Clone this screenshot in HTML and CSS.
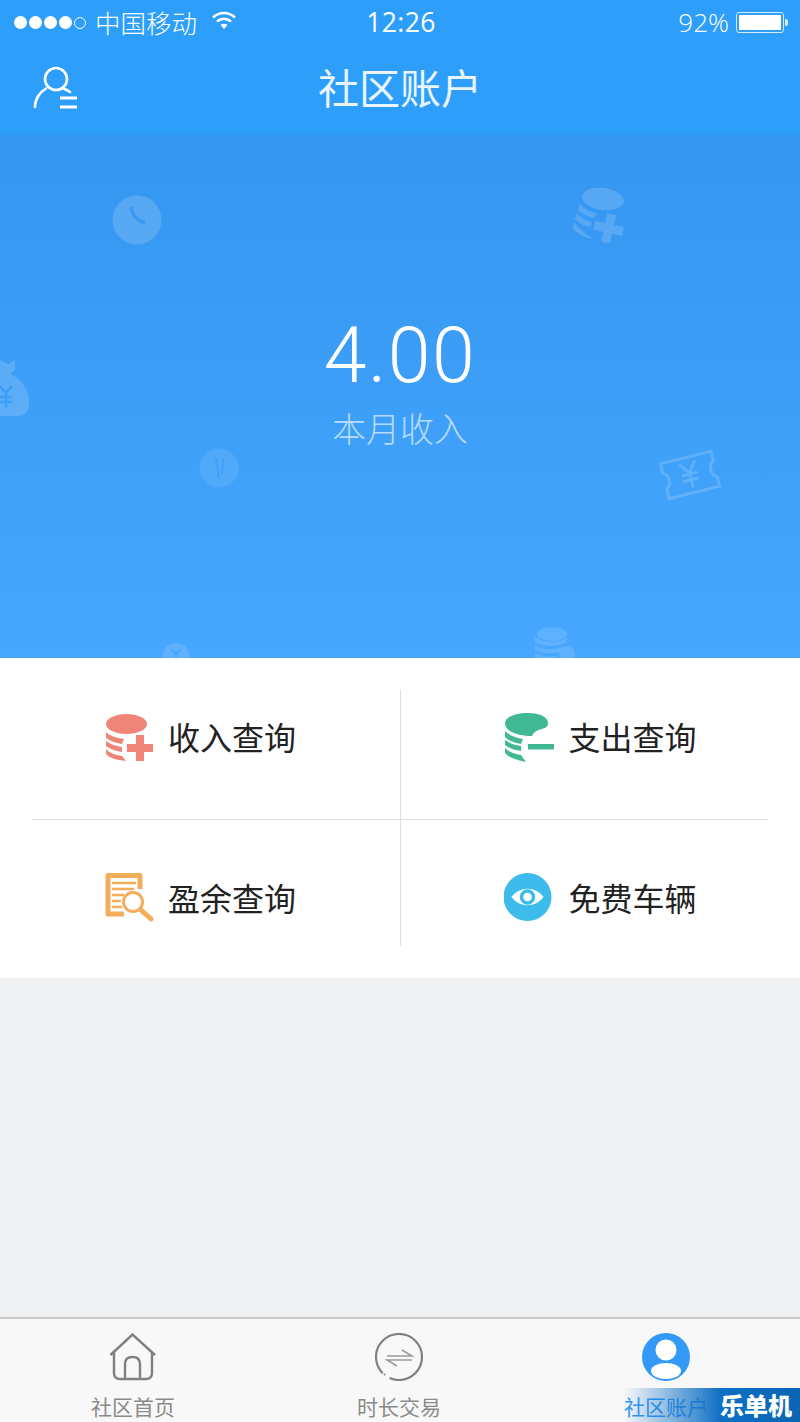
FILE: index.html
```html
<!DOCTYPE html>
<html lang="zh-CN">
<head>
    <meta charset="UTF-8">
    <title>社区账户</title>
    <link rel="stylesheet" href="styles.css">
</head>
<body>
    <div class="app">
        <header class="top">
            <div class="status">
                <div class="status-left">
                    <span class="dots"><i></i><i></i><i></i><i></i><i class="empty"></i></span>
                    <span class="carrier">中国移动</span>
                    <svg class="wifi" width="26" height="20" viewBox="0 0 26 20">
                        <path d="M2 7.500C8.500 1.500 17.500 1.500 24 7.500M6 11.500C10 8 16 8 20 11.500" fill="none" stroke="#fff" stroke-width="2.600"/>
                        <path d="M9.500 15C11.500 13.300 14.500 13.300 16.500 15L13 19Z" fill="#fff"/>
                    </svg>
                </div>
                <span class="time">12:26</span>
                <div class="status-right">
                    <span class="percent">92%</span>
                    <span class="battery"><span class="battery-fill"></span></span>
                    <span class="battery-tip"></span>
                </div>
            </div>
            <nav class="nav">
                <svg class="nav-user" width="46" height="46" viewBox="0 0 46 46">
                    <g fill="none" stroke="#fff" stroke-width="2.600" stroke-linecap="round">
                        <circle cx="23" cy="13" r="11"/>
                        <path d="M2 41C2 33 7 26 13 22.500M30 22.500C32.500 23.300 35 24.500 37 26"/>
                    </g>
                    <path d="M27 32H44M27 41H44" stroke="#fff" stroke-width="3"/>
                </svg>
                <h1 class="nav-title">社区账户</h1>
            </nav>
        </header>

        <section class="hero">
            <!-- faded decorations -->
            <svg class="deco deco-clock" width="50" height="52" viewBox="0 0 50 52">
                <circle cx="25" cy="26" r="24.500" fill="#fff"/>
                <path d="M19 13C20 21 24 26 33 29" fill="none" stroke="#3a9cf2" stroke-width="3"/>
            </svg>
            <svg class="deco deco-coins" width="54" height="58" viewBox="0 0 54 58">
                <ellipse cx="30" cy="12" rx="21" ry="11" fill="#fff" transform="rotate(8 30 12)"/>
                <path d="M7 17C11 22 17 25 24 26L21 31C15 30 9 27 5 23ZM4 26C8 31 13 34 19 35L17 40C11 39 6 36 2 32ZM1 35C5 41 12 46 20 52C10 50 3 46 0 41Z" fill="#fff"/>
                <path d="M31 27H40V37H50V46H40V56H31V46H21V37H31Z" fill="#fff" transform="rotate(12 36 42)"/>
            </svg>
            <svg class="deco deco-bag" width="30" height="58" viewBox="0 0 30 58">
                <path d="M0 1L8 5L15 1L15 11L10 15C22 20 30 32 29 45C29 53 24 57 18 57H0Z" fill="#fff"/>
                <path d="M0 27L6 34L12 27M6 34V49M0 38H12M0 43H12" fill="none" stroke="#3c9ff5" stroke-width="2.600"/>
            </svg>
            <svg class="deco deco-coin" width="40" height="40" viewBox="0 0 40 40">
                <circle cx="20" cy="20" r="19.500" fill="#fff" opacity=".7"/>
                <path d="M17 10L20 30M24 10L23 26" fill="none" stroke="#419ff6" stroke-width="2"/>
            </svg>
            <svg class="deco deco-ticket" width="62" height="58" viewBox="0 0 62 58">
                <g fill="none" stroke="#fff" stroke-width="3" transform="rotate(-14 31 29)">
                    <path d="M5 11H57V21C51 23 51 35 57 37V47H5V37C11 35 11 23 5 21Z"/>
                    <path d="M23 16L31 27L39 16M31 27V42M23 28H39M23 34H39"/>
                </g>
            </svg>
            <svg class="deco deco-coins-low" width="44" height="32" viewBox="0 0 44 32">
                <ellipse cx="19" cy="8" rx="15" ry="7" fill="#fff"/>
                <path d="M2 11C8 17 26 17 34 12V16C26 21 8 21 2 16ZM2 19C8 24 22 24 30 21V25C22 28 8 28 2 24ZM2 27C8 30 16 31 24 30V32H2Z" fill="#fff"/>
                <circle cx="34" cy="28" r="8" fill="#fff"/>
            </svg>
            <svg class="deco deco-round-low" width="28" height="15" viewBox="0 0 28 15">
                <circle cx="14" cy="14" r="14" fill="#fff"/>
                <path d="M9 6L14 11L19 6M14 11V15" fill="none" stroke="#47a6fe" stroke-width="2"/>
            </svg>

            <div class="amount">4.00</div>
            <div class="amount-label">本月收入</div>
        </section>

        <section class="menu">
            <div class="menu-grid">
                <a class="menu-item menu-item-tl" href="#">
                    <svg width="50" height="50" viewBox="0 0 50 50">
                        <ellipse cx="22.500" cy="11" rx="20.500" ry="10" fill="#ef8578"/>
                        <path d="M2 19C6 23 13 25 20 26L18 31C11 30 6 28 2 25ZM2 28C6 31 11 33 18 34V39C11 38 6 36 2 33ZM2 36C6 40 11 42 18 43L22 48C12 47 6 45 2 41Z" fill="#ef8578"/>
                        <path d="M32 22H40V31H49V39H40V48H32V39H23V31H32Z" fill="#ef8578"/>
                    </svg>
                    <span>收入查询</span>
                </a>
                <a class="menu-item menu-item-tr" href="#">
                    <svg width="50" height="50" viewBox="0 0 50 50">
                        <path d="M1 10C1 4 12 0 24 0C36 0 44 4 44 10C44 14 41 15 38 16C33 17 30 19 28 23C18 23 1 20 1 10Z" fill="#3fb893"/>
                        <path d="M1 18C5 22 12 25 19 26L17 31C10 30 5 28 1 24ZM1 27C5 30 10 32 17 33V38C10 37 5 35 1 32ZM1 35C5 39 10 41 17 42L22 49C12 47 5 45 1 40Z" fill="#3fb893"/>
                        <rect x="24" y="31" width="26" height="5.500" fill="#3fb893"/>
                    </svg>
                    <span>支出查询</span>
                </a>
                <a class="menu-item menu-item-bl" href="#">
                    <svg width="50" height="50" viewBox="0 0 50 50">
                        <path d="M20 42H4V3.500H36V17" fill="none" stroke="#f4ad5a" stroke-width="5" stroke-linejoin="round"/>
                        <path d="M8 11H32M8 17H30M8 23H20M8 29H17M8 35H18" stroke="#f4ad5a" stroke-width="2.500"/>
                        <circle cx="29" cy="30" r="9.500" fill="#fff" stroke="#f4ad5a" stroke-width="3"/>
                        <path d="M37 38L47 47" stroke="#f4ad5a" stroke-width="5" stroke-linecap="round"/>
                    </svg>
                    <span>盈余查询</span>
                </a>
                <a class="menu-item menu-item-br" href="#">
                    <svg width="50" height="50" viewBox="0 0 50 50">
                        <circle cx="23.500" cy="25" r="24" fill="#3dbcec"/>
                        <path d="M7.500 25C15.500 14 31.500 14 39.500 25C31.500 36 15.500 36 7.500 25Z" fill="#fff"/>
                        <circle cx="23.500" cy="25" r="6" fill="#fff" stroke="#3dbcec" stroke-width="3.500"/>
                    </svg>
                    <span>免费车辆</span>
                </a>
            </div>
        </section>

        <div class="spacer"></div>

        <footer class="tabs">
            <a class="tab" href="#">
                <svg width="48" height="48" viewBox="0 0 48 48">
                    <g fill="none" stroke="#808080" stroke-width="2.400">
                        <path d="M1.500 22L23.500 1.500L46 22"/>
                        <path d="M5 19V40Q5 46 11 46H37Q43 46 43 40V19"/>
                        <path d="M16 46V31Q16 24 23.500 24Q31 24 31 31V46"/>
                    </g>
                </svg>
                <span>社区首页</span>
            </a>
            <a class="tab" href="#">
                <svg width="48" height="48" viewBox="0 0 48 48">
                    <circle cx="24" cy="24" r="23" fill="none" stroke="#808080" stroke-width="2.200" stroke-dasharray="136 8.500" stroke-dashoffset="-54"/>
                    <circle cx="9.500" cy="41.500" r="1" fill="#808080"/>
                    <path d="M12 23H37L27 17M37 27H12L22 33" fill="none" stroke="#999" stroke-width="1.500"/>
                </svg>
                <span>时长交易</span>
            </a>
            <a class="tab tab-active" href="#">
                <svg width="48" height="48" viewBox="0 0 48 48">
                    <circle cx="24" cy="24" r="24" fill="#3399f6"/>
                    <circle cx="24" cy="17" r="10.500" fill="#fff"/>
                    <ellipse cx="24" cy="38" rx="15" ry="8" fill="#fff"/>
                </svg>
                <span>社区账户</span>
            </a>
        </footer>

        <div class="watermark">乐单机</div>
    </div>
</body>
</html>
```

FILE: styles.css
```css
* {
    margin: 0;
    padding: 0;
    box-sizing: border-box;
}

body {
    font-family: "Noto Sans CJK SC", "Noto Sans", sans-serif;
    background-color: #eff1f3;
}

a {
    text-decoration: none;
    color: inherit;
}

.app {
    position: relative;
    width: 800px;
    height: 1422px;
    overflow: hidden;
    display: flex;
    flex-direction: column;
}

/* Header */
.top {
    height: 135px;
    background-color: #2e9efb;
    color: #fff;
}

.status {
    height: 44px;
    display: grid;
    grid-template-columns: 1fr auto 1fr;
    align-items: center;
    padding: 0 12px 0 14px;
}

.status-left,
.status-right {
    display: flex;
    align-items: center;
}

.status-right {
    justify-content: flex-end;
}

.dots {
    display: flex;
    gap: 2px;
    margin-right: 9px;
}

.dots i {
    width: 13px;
    height: 13px;
    border-radius: 50%;
    background-color: #fff;
}

.dots i.empty {
    width: 12px;
    height: 12px;
    margin-top: 1px;
    background: none;
    border: 1px solid #fff;
}

.carrier {
    font-size: 25.5px;
    line-height: 44px;
    font-weight: 300;
}

.wifi {
    margin-left: 14px;
    margin-top: -4px;
}

.time {
    font-family: "Open Sans", sans-serif;
    font-size: 26.5px;
    letter-spacing: 0.4px;
}

.percent {
    font-family: "Open Sans", sans-serif;
    font-size: 26px;
    font-weight: 300;
    margin-right: 7px;
}

.battery {
    width: 48px;
    height: 21px;
    border: 1px solid #d5ebfe;
    border-radius: 3px;
    padding: 2px;
    display: flex;
}

.battery-fill {
    width: 42px;
    background-color: #fff;
}

.battery-tip {
    width: 3px;
    height: 7px;
    margin-left: 1px;
    background-color: #d5ebfe;
    border-radius: 0 2px 2px 0;
}

.nav {
    height: 91px;
    position: relative;
    display: flex;
    align-items: center;
    justify-content: center;
    padding-bottom: 8px;
}

.nav-user {
    position: absolute;
    left: 33px;
    top: 22px;
}

.nav-title {
    font-size: 41px;
    font-weight: 400;
    line-height: 80px;
    color: #eaf5ff;
}

/* Hero */
.hero {
    position: relative;
    height: 523px;
    background: linear-gradient(#3496f0, #47a7ff);
    overflow: hidden;
    text-align: center;
    color: #fff;
    padding-top: 176px;
}

.deco {
    position: absolute;
    opacity: 0.16;
}

.deco-clock { left: 112px; top: 59px; }
.deco-coins { left: 573px; top: 52px; }
.deco-bag { left: 0; top: 224px; }
.deco-coin { left: 199px; top: 313px; opacity: 0.13; }
.deco-ticket { left: 659px; top: 311px; }
.deco-coins-low { left: 533px; top: 491px; opacity: 0.12; }
.deco-round-low { left: 162px; top: 508px; opacity: 0.12; }

.amount {
    font-family: Roboto, sans-serif;
    font-size: 77px;
    font-weight: 300;
    letter-spacing: 1.5px;
    line-height: 90px;
}

.amount-label {
    margin-top: 2px;
    font-size: 34px;
    font-weight: 300;
    line-height: 50px;
    color: #b6dcfd;
}

/* Menu */
.menu {
    height: 320px;
    padding: 32px;
    background-color: #fff;
}

.menu-grid {
    height: 256px;
    display: grid;
    grid-template-columns: 368px 368px;
    grid-template-rows: 130px 126px;
}

.menu-item {
    display: flex;
    align-items: center;
    justify-content: center;
    gap: 14px;
    font-size: 32px;
    color: #222;
}

.menu-item-tl,
.menu-item-tr {
    border-bottom: 1px solid #dddee0;
    padding-bottom: 37px;
}

.menu-item-tl svg,
.menu-item-tr svg {
    margin-top: 3px;
}

.menu-item-bl,
.menu-item-br {
    padding-top: 28px;
}

.menu-item-tl,
.menu-item-bl {
    padding-right: 32px;
}

.menu-item-tr,
.menu-item-br {
    padding-left: 32px;
    border-left: 1px solid #dddee0;
}

.spacer {
    flex: 1;
}

/* Tabs */
.tabs {
    height: 105px;
    display: grid;
    grid-template-columns: 266px 266px 268px;
    background-color: #f8f8f8;
    border-top: 2px solid #c9c9c9;
}

.tab {
    display: flex;
    flex-direction: column;
    align-items: center;
    padding-top: 14px;
    font-size: 21px;
    line-height: 32px;
    color: #8a8a8a;
}

.tab span {
    margin-top: 9px;
}

.tab-active {
    color: #3399f6;
}

.watermark {
    position: absolute;
    right: 0;
    bottom: 0;
    width: 176px;
    height: 34px;
    background: linear-gradient(90deg, rgba(15, 105, 190, 0), #0f6fc4 55%, #0a66b4);
    color: #fff;
    font-size: 24px;
    font-weight: 900;
    line-height: 34px;
    text-align: right;
    padding-right: 8px;
}
```
